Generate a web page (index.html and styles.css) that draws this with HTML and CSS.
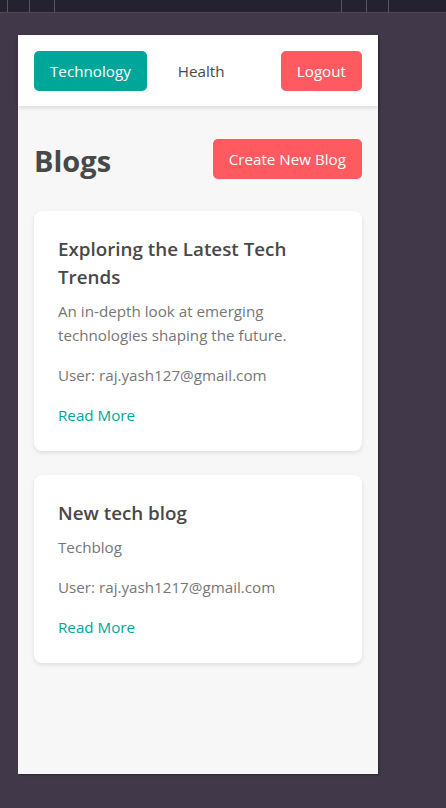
FILE: index.html
```html
<!DOCTYPE html>
<html lang="en">
<head>
<meta charset="utf-8">
<title>Blogs</title>
<link rel="stylesheet" href="styles.css">
</head>
<body>
<div class="ruler">
  <div class="ticks ticks-left"><span></span><span></span><span></span></div>
  <div class="ticks ticks-right"><span></span><span></span><span></span></div>
</div>
<div class="device">
  <header class="nav">
    <div class="nav-links">
      <button class="btn btn-teal">Technology</button>
      <button class="btn btn-plain">Health</button>
    </div>
    <button class="btn btn-red">Logout</button>
  </header>
  <main class="content">
    <div class="title-row">
      <h1 class="page-title">Blogs</h1>
      <button class="btn btn-red">Create New Blog</button>
    </div>
    <div class="cards">
      <article class="card">
        <h2 class="card-title">Exploring the Latest Tech Trends</h2>
        <p class="card-desc">An in-depth look at emerging technologies shaping the future.</p>
        <p class="card-user">User: raj.yash127@gmail.com</p>
        <a class="card-link" href="#">Read More</a>
      </article>
      <article class="card">
        <h2 class="card-title">New tech blog</h2>
        <p class="card-desc">Techblog</p>
        <p class="card-user">User: raj.yash1217@gmail.com</p>
        <a class="card-link" href="#">Read More</a>
      </article>
    </div>
  </main>
</div>
</body>
</html>
```
FILE: styles.css
```css
* { box-sizing: border-box; }
html, body { margin: 0; padding: 0; }
body {
  background: #413849;
  font-family: "Open Sans", "Noto Sans", sans-serif;
  width: 446px;
  height: 808px;
  overflow: hidden;
}
.ruler {
  height: 13px;
  background: #252230;
  border-bottom: 1px solid #4d4558;
  display: flex;
  justify-content: space-between;
  padding: 0 57px 0 7px;
}
.ticks { display: flex; height: 12px; }
.ticks span { width: 1px; height: 12px; background: #5c5368; }
.ticks-left span + span { margin-left: 21px; }
.ticks-left span:nth-child(3) { margin-left: 24px; }
.ticks-right span + span { margin-left: 24px; }
.ticks-right span:nth-child(3) { margin-left: 21px; }

.device {
  margin: 22px 0 0 18px;
  width: 360px;
  height: 739px;
  background: #f7f7f7;
  box-shadow: 1px 1px 2px rgba(0,0,0,0.35);
}
.nav {
  height: 71px;
  background: #fff;
  display: flex;
  align-items: center;
  justify-content: space-between;
  padding: 0 16px;
  box-shadow: 0 2px 5px rgba(0,0,0,0.12);
  position: relative;
}
.nav-links { display: flex; gap: 15px; }
.btn {
  font-family: inherit;
  font-size: 15.2px;
  height: 40px;
  padding: 0 16px;
  border: none;
  border-radius: 5px;
  cursor: pointer;
  line-height: 40px;
}
.btn-teal { background: #00a699; color: #fff; }
.btn-red { background: #ff5a5f; color: #fff; }
.btn-plain { background: transparent; color: #484848; }

.content { padding: 33px 16px 0; }
.title-row {
  display: flex;
  justify-content: space-between;
  align-items: center;
  height: 40px;
}
.page-title {
  margin: 0;
  font-size: 29px;
  font-weight: 700;
  color: #484848;
  padding-top: 3px;
}
.cards {
  margin-top: 32px;
  display: flex;
  flex-direction: column;
  gap: 24px;
}
.card {
  background: #fff;
  border-radius: 8px;
  padding: 24px;
  box-shadow: 0 2px 4px rgba(0,0,0,0.1);
  display: flex;
  flex-direction: column;
  align-items: flex-start;
}
.card-title {
  margin: 0;
  font-size: 18.8px;
  font-weight: 600;
  line-height: 28px;
  color: #484848;
}
.card-desc {
  margin: 8px 0 0;
  font-size: 15.2px;
  line-height: 24px;
  color: #767676;
}
.card-user {
  margin: 16px 0 0;
  font-size: 15.2px;
  line-height: 24px;
  color: #767676;
}
.card-link {
  margin-top: 16px;
  font-size: 15.2px;
  line-height: 24px;
  color: #00a699;
  text-decoration: none;
}
```
